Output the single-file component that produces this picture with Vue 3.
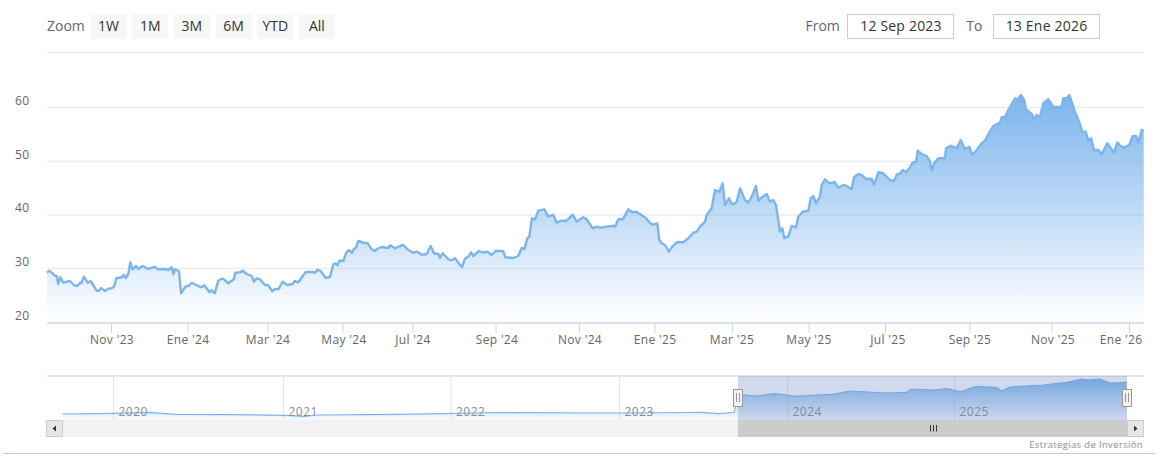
<template>
  <div class="stock-chart">
    <div class="toolbar">
      <span class="caption">Zoom</span>
      <button v-for="range in ranges" :key="range" class="range-btn">{{ range }}</button>
      <span class="caption from-label">From</span>
      <span class="date-box">12 Sep 2023</span>
      <span class="caption to-label">To</span>
      <span class="date-box">13 Ene 2026</span>
    </div>

    <!-- viewBox starts at y=52 so the coordinates match the page -->
    <svg class="chart" width="1161" height="410" viewBox="0 52 1161 410">
      <defs>
        <linearGradient id="areaFill" gradientUnits="userSpaceOnUse" x1="0" y1="95" x2="0" y2="322">
          <stop offset="0" stop-color="#7cb5ec" />
          <stop offset="1" stop-color="#7cb5ec" stop-opacity="0" />
        </linearGradient>
        <linearGradient id="navFill" gradientUnits="userSpaceOnUse" x1="0" y1="379" x2="0" y2="420">
          <stop offset="0" stop-color="#7cb5ec" />
          <stop offset="1" stop-color="#7cb5ec" stop-opacity="0.05" />
        </linearGradient>
      </defs>

      <!-- grid -->
      <line v-for="y in gridLines" :key="y" class="grid" x1="47" x2="1144" :y1="y" :y2="y" />
      <text v-for="tick in yTicks" :key="tick.label" class="axis-label" x="15" :y="tick.y">{{ tick.label }}</text>

      <!-- main series -->
      <path :d="areaPath" fill="url(#areaFill)" />
      <path :d="linePath" class="series" />

      <!-- x axis -->
      <line class="axis" x1="47" x2="1144" y1="323" y2="323" />
      <line v-for="tick in xTicks" :key="tick.x" class="tick" :x1="tick.x" :x2="tick.x" y1="323" y2="333" />
      <text
        v-for="tick in xTicks"
        :key="tick.label"
        class="axis-label"
        text-anchor="middle"
        :x="tick.labelX"
        y="344"
      >{{ tick.label }}</text>

      <!-- navigator -->
      <line class="nav-top" x1="47" x2="1144" y1="376" y2="376" />
      <line v-for="year in navYears" :key="year.x" class="nav-grid" :x1="year.x" :x2="year.x" y1="376" y2="420" />
      <path :d="navArea" fill="url(#navFill)" />
      <path :d="navLine" class="nav-series" />
      <text v-for="year in navYears" :key="year.label" class="nav-label" :x="year.x + 5" y="416">{{ year.label }}</text>
      <rect class="nav-mask" x="738" y="376" width="389" height="44" />

      <!-- scrollbar -->
      <rect x="46" y="420" width="1098" height="17" fill="#f2f2f2" />
      <rect x="738" y="420" width="389" height="17" fill="#cccccc" />
      <path d="M930.500 425v6.500M933.500 425v6.500M936.500 425v6.500" class="grip" />
      <rect class="scroll-btn" x="46.5" y="420.5" width="16" height="16" />
      <path d="M56 425.500l-3.500 3 3.500 3z" fill="#333" />
      <rect class="scroll-btn" x="1127.500" y="420.500" width="16" height="16" />
      <path d="M1134 425.500l3.500 3-3.500 3z" fill="#333" />

      <!-- handles -->
      <g v-for="x in handles" :key="x">
        <rect class="handle" :x="x - 4.5" y="389.5" width="9" height="17" />
        <path class="handle-grip" :d="`M${x - 1.5} 393v9M${x + 1.5} 393v9`" />
      </g>

      <text class="credit" x="1143" y="448" text-anchor="end">Estrategias de Inversión</text>
      <line class="bottom-rule" x1="3" x2="1155" y1="453.500" y2="453.500" />
    </svg>
  </div>
</template>

<script setup>
const ranges = ['1W', '1M', '3M', '6M', 'YTD', 'All']

const gridLines = [107.5, 161.5, 215, 268.5, 52.5]
const yTicks = [
  { label: '60', y: 105 },
  { label: '50', y: 159 },
  { label: '40', y: 212 },
  { label: '30', y: 266 },
  { label: '20', y: 320 }
]

const xTicks = [
  { label: "Nov '23", x: 111.5, labelX: 112 },
  { label: "Ene '24", x: 188, labelX: 188 },
  { label: "Mar '24", x: 268, labelX: 268 },
  { label: "May '24", x: 343, labelX: 344 },
  { label: "Jul '24", x: 413, labelX: 413 },
  { label: "Sep '24", x: 496, labelX: 497 },
  { label: "Nov '24", x: 579.5, labelX: 580 },
  { label: "Ene '25", x: 655, labelX: 655 },
  { label: "Mar '25", x: 732.5, labelX: 732 },
  { label: "May '25", x: 809, labelX: 809 },
  { label: "Jul '25", x: 885.5, labelX: 888 },
  { label: "Sep '25", x: 970, labelX: 970 },
  { label: "Nov '25", x: 1052, labelX: 1053 },
  { label: "Ene '26", x: 1129.5, labelX: 1121 }
]

const navYears = [
  { label: '2020', x: 113.5 },
  { label: '2021', x: 283.5 },
  { label: '2022', x: 451 },
  { label: '2023', x: 619.5 },
  { label: '2024', x: 787.5 },
  { label: '2025', x: 954.5 }
]
const handles = [738, 1127]

// Points read off the reference, in 3x crop coordinates per crop
const scale = (pts, ox, oy) => pts.map(([x, y]) => [ox + x / 3, oy + y / 3])

const partA = scale([
  [141, 278], [148, 272], [155, 278], [165, 287], [170, 288], [175, 312], [181, 292], [190, 308], [210, 303],
  [222, 316], [232, 318], [240, 308], [244, 310], [252, 290], [263, 308], [272, 303], [290, 332], [296, 333],
  [303, 324], [315, 333], [325, 326], [335, 325], [343, 318], [349, 295], [365, 292], [371, 285], [377, 294],
  [385, 282], [391, 247], [398, 268], [408, 258], [415, 267], [428, 258], [445, 267], [458, 262], [467, 262],
  [473, 268], [495, 267], [505, 270], [515, 262], [520, 283], [525, 268], [537, 274], [543, 340], [558, 318],
  [566, 318], [575, 308], [590, 316], [605, 322], [613, 316], [628, 336], [635, 331], [644, 340], [655, 302],
  [665, 296], [672, 298], [685, 310], [695, 302], [702, 298], [706, 278], [722, 277], [728, 272], [740, 282],
  [755, 288], [762, 305], [770, 295], [780, 298], [795, 315], [805, 316], [817, 334], [825, 327], [835, 328],
  [848, 305], [862, 315], [878, 312], [884, 303], [895, 307], [917, 276], [935, 276], [945, 278], [952, 269],
  [962, 273], [977, 294], [990, 291], [1000, 253], [1007, 250], [1013, 256], [1018, 242], [1030, 243],
  [1038, 220], [1046, 210], [1056, 218], [1063, 205], [1068, 203], [1075, 183], [1090, 188], [1103, 190],
  [1115, 208], [1125, 213], [1130, 207], [1145, 201], [1165, 204], [1170, 196], [1185, 205], [1200, 198]
], 0, 180)

const partB = scale([
  [10, 195], [25, 210], [40, 218], [52, 215], [65, 224], [80, 222], [92, 198], [102, 220], [115, 222],
  [120, 234], [128, 220], [145, 238], [155, 241], [165, 235], [178, 252], [186, 261], [195, 236], [207, 228],
  [213, 217], [220, 228], [237, 213], [250, 218], [262, 215], [275, 225], [287, 212], [310, 214], [316, 232],
  [340, 234], [355, 228], [365, 204], [373, 208], [382, 175], [388, 170], [396, 115], [405, 118], [415, 92],
  [433, 88], [445, 110], [460, 104], [470, 128], [482, 122], [500, 122], [518, 104], [530, 125], [550, 112],
  [560, 118], [578, 145], [590, 140], [600, 143], [640, 137], [645, 140], [655, 118], [668, 118], [685, 88],
  [695, 96], [710, 96], [735, 112], [750, 128], [758, 134], [772, 130], [778, 180], [785, 190], [795, 195],
  [807, 215], [815, 202], [830, 187], [850, 187], [865, 175], [880, 158], [890, 155], [900, 140], [915, 125],
  [920, 105], [935, 85], [945, 30], [958, 35], [968, 10], [975, 75], [987, 55], [995, 72], [1005, 70],
  [1010, 65], [1020, 25], [1035, 60], [1045, 68], [1055, 50], [1068, 18], [1075, 62], [1088, 50], [1100, 42],
  [1110, 65], [1120, 60], [1128, 75], [1140, 155], [1147, 145], [1153, 175], [1160, 170], [1165, 170],
  [1175, 138], [1188, 142], [1195, 110]
], 400, 180)

const partC = scale([
  [60, 405], [68, 395], [85, 392], [92, 355], [100, 348], [108, 370], [120, 350], [125, 315], [135, 298],
  [145, 308], [155, 310], [163, 305], [175, 323], [190, 315], [200, 318], [215, 328], [222, 292], [235, 282],
  [245, 285], [258, 297], [275, 296], [282, 315], [295, 277], [310, 280], [330, 300], [342, 303], [350, 284],
  [360, 280], [368, 270], [378, 277], [388, 265], [398, 248], [408, 245], [413, 212], [425, 222], [440, 228],
  [450, 245], [455, 272], [462, 250], [475, 235], [495, 235], [498, 205], [512, 197], [530, 205], [542, 180],
  [555, 208], [568, 200], [577, 225], [590, 210], [605, 190], [615, 182], [628, 157], [640, 138], [660, 128],
  [665, 112], [675, 112], [685, 90], [705, 55], [713, 58], [722, 45], [732, 58], [738, 88], [755, 102],
  [763, 118], [770, 105], [780, 110], [790, 70], [805, 58], [820, 80], [835, 82], [845, 78], [850, 55],
  [860, 55], [868, 45], [885, 95], [897, 125], [907, 155], [917, 155], [925, 182], [933, 175], [942, 210],
  [955, 210], [965, 222], [982, 190], [1002, 218], [1012, 187], [1022, 198], [1030, 203], [1048, 195],
  [1058, 168], [1068, 168], [1075, 188], [1085, 150], [1091, 152]
], 780, 80)

const navPoints = [
  ...scale([
    [188, 147], [340, 145], [450, 142], [525, 148], [700, 149], [850, 151], [915, 154], [950, 150], [1100, 149],
    [1200, 148]
  ], 0, 365),
  [500, 412.5], [620, 413], [690, 412.5],
  ...scale([
    [0, 142], [60, 146], [102, 142], [108, 122], [112, 88], [170, 93], [220, 86], [260, 90], [290, 94], [350, 90],
    [400, 88], [450, 78], [560, 84], [620, 82], [635, 72], [700, 75], [740, 71], [780, 80], [830, 64], [890, 68],
    [905, 78], [930, 66], [1030, 60], [1100, 52], [1145, 42], [1165, 45], [1200, 42], [1230, 54], [1280, 52]
  ], 700, 365)
]

const toPath = (pts) => pts.map(([x, y], i) => `${i ? 'L' : 'M'}${x.toFixed(1)} ${y.toFixed(1)}`).join('')

const mainPoints = [...partA, ...partB, ...partC]
const linePath = toPath(mainPoints)
const areaPath = `${linePath}L1144 322L47 322Z`
const navLine = toPath(navPoints)
const navArea = `${navLine}L1127 420L63 420Z`
</script>

<style scoped>
.stock-chart {
  width: 1161px;
  height: 462px;
  overflow: hidden;
  background: #fff;
  font-family: "Open Sans", sans-serif;
}

.toolbar {
  display: flex;
  align-items: center;
  height: 52px;
  padding: 1px 61px 0 47px;
  box-sizing: border-box;
  gap: 5.7px;
}

.caption {
  color: #666;
  font-size: 14px;
  line-height: 19px;
  padding-bottom: 3px;
}

.range-btn {
  width: 36px;
  height: 25px;
  padding: 0 0 2px;
  border: none;
  border-radius: 2px;
  background: #f7f7f7;
  color: #333;
  font-family: inherit;
  font-size: 14px;
}

.from-label {
  margin-left: auto;
  margin-right: 2px;
}

.to-label {
  margin-left: 6px;
  margin-right: 5px;
}

.date-box {
  width: 107px;
  height: 25px;
  box-sizing: border-box;
  border: 1px solid #ccc;
  color: #333;
  font-size: 14px;
  letter-spacing: 0.2px;
  line-height: 21px;
  text-align: center;
}

.chart {
  display: block;
}

.grid {
  stroke: #ececec;
  stroke-width: 1.4;
}

.axis {
  stroke: #ccd6eb;
  stroke-width: 1.5;
}

.tick {
  stroke: #ccd6eb;
}

.axis-label {
  fill: #666;
  font-size: 12px;
  letter-spacing: 0.35px;
}

.series {
  fill: none;
  stroke: #7cb5ec;
  stroke-width: 2.4;
  stroke-linejoin: round;
}

.nav-top {
  stroke: #e6e6e6;
  stroke-width: 2;
}

.nav-grid {
  stroke: #e6e6e6;
}

.nav-series {
  fill: none;
  stroke: #7cb5ec;
  stroke-width: 1.2;
}

.nav-label {
  fill: #8e8e8e;
  font-size: 12px;
  letter-spacing: 0.5px;
}

.nav-mask {
  fill: rgba(102, 133, 194, 0.3);
}

.grip {
  stroke: #333;
  fill: none;
}

.scroll-btn {
  fill: #e6e6e6;
  stroke: #ccc;
}

.handle {
  fill: #f2f2f2;
  stroke: #999;
}

.handle-grip {
  stroke: #999;
  fill: none;
}

.credit {
  fill: #8e8e8e;
  font-size: 9.5px;
  letter-spacing: 0.35px;
}

.bottom-rule {
  stroke: #c8c4e0;
}
</style>
